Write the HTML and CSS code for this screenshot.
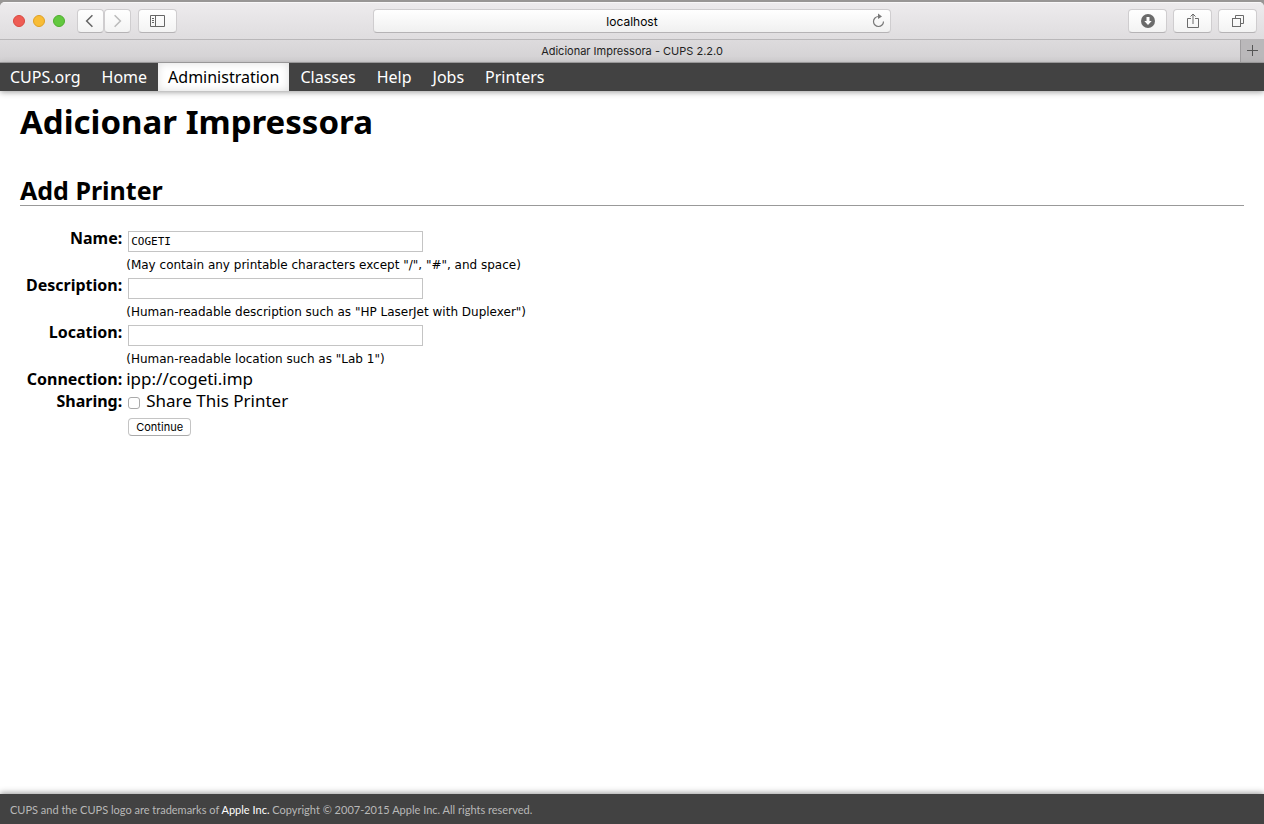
FILE: index.html
```html
<!DOCTYPE html>
<html lang="en">
<head>
<meta charset="utf-8">
<title>Adicionar Impressora - CUPS 2.2.0</title>
<link rel="stylesheet" href="styles.css">
</head>
<body>
<div class="window">
  <header class="chrome">
    <div class="toolbar">
      <div class="tools start">
        <div class="lights"><span class="light close"></span><span class="light minimize"></span><span class="light expand"></span></div>
        <div class="history">
          <button class="tool back" type="button" aria-label="Back"><svg width="26" height="22" viewBox="0 0 26 22"><path d="M15 5 9 11l6 6" fill="none" stroke="#666" stroke-width="1.600"/></svg></button>
          <button class="tool forward" type="button" aria-label="Forward"><svg width="26" height="22" viewBox="0 0 26 22"><path d="m10 5 6 6-6 6" fill="none" stroke="#bbb" stroke-width="1.600"/></svg></button>
        </div>
        <button class="tool" type="button" aria-label="Sidebar"><svg width="16" height="14" viewBox="0 0 16 14" fill="none" stroke="#666"><path d="M.5 1.500h14v11H.5zM5.500 1.500v11M2 4.500h2M2 6.500h2M2 8.500h2"/></svg></button>
      </div>
      <div class="address">
        <input class="url" type="text" value="localhost" aria-label="Address">
        <button class="reload" type="button" aria-label="Reload"><svg width="14" height="16" viewBox="0 0 14 16"><path d="M6.500 3.500A5 5 0 1 0 11.500 8.500" fill="none" stroke="#777" stroke-width="1.200"/><path d="M6 .5 10 3.500 6 6z" fill="#777"/></svg></button>
      </div>
      <div class="tools end">
        <button class="tool" type="button" aria-label="Downloads"><svg width="14" height="14" viewBox="0 0 14 14"><circle cx="7" cy="7" r="7" fill="#6b6b6b"/><path d="M5.500 3h3v4h2.200L7 11 3.300 7h2.200z" fill="#fff"/></svg></button>
        <button class="tool" type="button" aria-label="Share"><svg width="12" height="16" viewBox="0 0 12 16" fill="none" stroke="#6b6b6b"><path d="M4 5.500H.5v9h11v-9H8M6 11V1M3.500 3.500 6 1l2.500 2.500"/></svg></button>
        <button class="tool" type="button" aria-label="Show tabs"><svg width="14" height="14" viewBox="0 0 14 14" fill="none" stroke="#6b6b6b"><rect x="1.500" y="4.500" width="8" height="8"/><path d="M4.500 4V1.500h8v8H10"/></svg></button>
      </div>
    </div>
    <div class="tabs">
      <div class="tab">Adicionar Impressora - CUPS 2.2.0</div>
      <button class="newtab" type="button" aria-label="New tab"><svg width="12" height="12" viewBox="0 0 12 12"><path d="M5.500 0v11M0 5.500h11" stroke="#555"/></svg></button>
    </div>
  </header>
  <nav class="nav">
    <a href="#">CUPS.org</a><a href="#">Home</a><a class="active" href="#">Administration</a><a href="#">Classes</a><a href="#">Help</a><a href="#">Jobs</a><a href="#">Printers</a>
  </nav>
  <main class="page">
    <h1>Adicionar Impressora</h1>
    <h2>Add Printer</h2>
    <form class="form">
      <label class="label" for="name">Name:</label>
      <div class="field"><input class="text" id="name" type="text" value="COGETI"><small>(May contain any printable characters except "/", "#", and space)</small></div>
      <label class="label" for="description">Description:</label>
      <div class="field"><input class="text" id="description" type="text"><small>(Human-readable description such as "HP LaserJet with Duplexer")</small></div>
      <label class="label" for="location">Location:</label>
      <div class="field"><input class="text" id="location" type="text"><small>(Human-readable location such as "Lab 1")</small></div>
      <span class="label">Connection:</span>
      <div class="value">ipp://cogeti.imp</div>
      <span class="label">Sharing:</span>
      <label class="value share"><input class="check" type="checkbox">Share This Printer</label>
      <button class="submit" type="button">Continue</button>
    </form>
  </main>
  <footer class="footer">CUPS and the CUPS logo are trademarks of <a href="#">Apple Inc.</a> Copyright © 2007-2015 Apple Inc. All rights reserved.</footer>
</div>
</body>
</html>
```
FILE: styles.css
```css
* { box-sizing: border-box; }
body {
  margin: 0;
  background: #989695;
  color: #000;
  font: 16px/22px "Noto Sans", "Open Sans", sans-serif;
}
svg { display: block; }
button, input { font-family: inherit; margin: 0; padding: 0; }
a { color: inherit; text-decoration: none; }
.window {
  display: flex;
  flex-direction: column;
  min-height: 100vh;
  border-top: 2px solid #989695;
}
.chrome {
  border-radius: 5px 5px 0 0;
  background: #e6e4e6;
  font-family: Inter, sans-serif;
  overflow: hidden;
}
.toolbar {
  display: grid;
  grid-template-columns: 1fr 518px 1fr;
  align-items: center;
  height: 38px;
  padding: 0 7px;
  border-bottom: 1px solid #b9b7b9;
  border-top: 1px solid #f8f7f8;
  background: linear-gradient(#edebed, #dfdddf);
}
.tools { display: flex; align-items: center; gap: 7px; }
.start { padding-left: 6px; }
.end { justify-content: flex-end; gap: 6px; }
.lights { display: flex; gap: 8px; padding-right: 5px; }
.light { width: 12px; height: 12px; border: 1px solid #d9483f; border-radius: 50%; background: #ee5c54; }
.minimize { border-color: #dfa023; background: #f8bc36; }
.expand { border-color: #4fae2e; background: #62c83f; }
.history { display: flex; }
.tool {
  display: flex;
  align-items: center;
  justify-content: center;
  width: 39px;
  height: 24px;
  border: 1px solid #cfcdcf;
  border-bottom-color: #b5b3b5;
  border-radius: 4px;
  background: linear-gradient(#fff, #f3f3f3);
}
.history .tool { width: 27px; }
.address {
  display: flex;
  align-items: center;
  height: 24px;
  padding: 0 4px 0 18px;
  border: 1px solid #cfcdcf;
  border-bottom-color: #b5b3b5;
  border-radius: 4px;
  background: linear-gradient(#fff, #f0f0f0);
}
.url { flex: 1; min-width: 0; border: 0; background: none; text-align: center; font-size: 12px; }
.reload { border: 0; background: none; }
.tabs { display: flex; height: 23px; border-bottom: 1px solid #999799; background: linear-gradient(#dddbdd, #d3d1d3); }
.tab { flex: 1; padding-left: 24px; text-align: center; font-size: 11px; color: #222; }
.newtab { display: flex; align-items: center; justify-content: center; width: 24px; border: 0; border-left: 1px solid #9f9d9f; background: #bab8ba; }
.nav {
  display: flex;
  gap: 1px;
  position: relative;
  background: #424242;
  color: #fff;
  line-height: 28px;
  box-shadow: 0 1px 6px #999;
}
.nav a { padding: 0 10px; }
.nav .active { background: #fff; color: #000; box-shadow: inset 0 0 8px #ddd; }
.page { flex: 1; padding: 8px 20px 0; background: #fff; }
h1 { margin: 0; font-size: 33px; line-height: 46px; }
h2 { margin: 30px 0 21px; border-bottom: 1px solid #999; font-size: 25px; line-height: 30px; }
.form { display: grid; grid-template-columns: max-content 1fr; column-gap: 4px; justify-items: start; }
.label { justify-self: end; padding-left: 6px; font-weight: bold; }
.field { display: flex; flex-direction: column; align-items: flex-start; padding-top: 4px; }
.text {
  width: 295px;
  height: 21px;
  margin-left: 2px;
  padding: 0 2px;
  border: 1px solid #c4c4c4;
  background: #fff;
  font: 11px "DejaVu Sans Mono", monospace;
}
small { font: 12px/18px "DejaVu Sans", sans-serif; padding-top: 4px; }
.value { font-size: 17px; }
.share { display: flex; align-items: center; gap: 6px; }
.check { appearance: none; width: 12px; height: 12px; margin: 3px 0 0 2px; border: 1px solid #aaa; border-radius: 3px; background: #fff; }
.submit {
  grid-column: 2;
  height: 18px;
  margin: 6px 0 0 2px;
  padding: 0 7px;
  border: 1px solid #c4c4c4;
  border-bottom-color: #aaa;
  border-radius: 4px;
  background: #fff;
  color: #000;
  font: 11px Inter, sans-serif;
}
.footer {
  position: relative;
  padding: 6px 10px 4px;
  background: #424242;
  color: #b8b8b8;
  font: 11px/20px Lato, sans-serif;
  box-shadow: 0 -1px 6px #999;
}
.footer a { color: #fff; }
```
